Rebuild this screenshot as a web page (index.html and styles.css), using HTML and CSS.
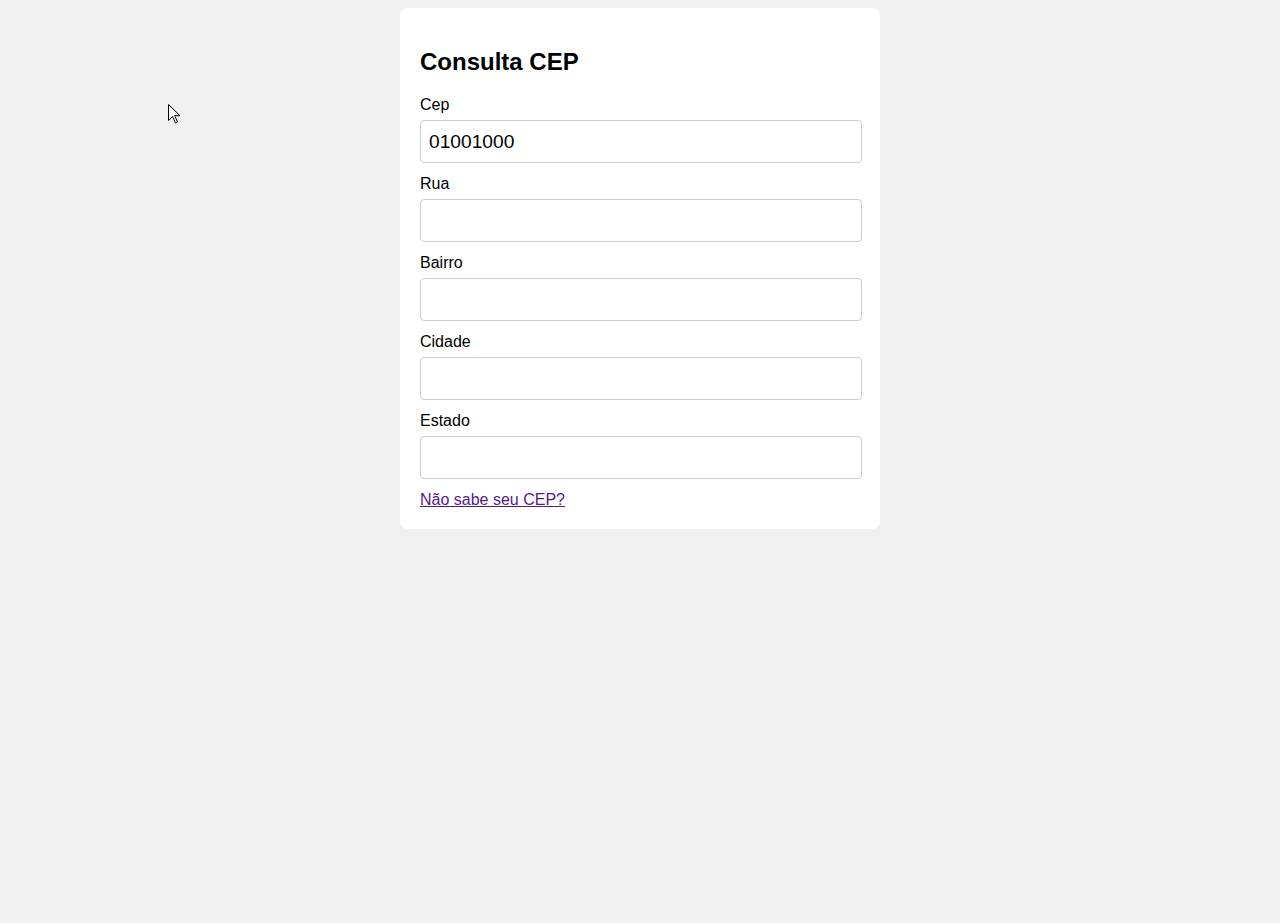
FILE: index.html
```html
<!DOCTYPE html>
<html lang="pt-BR">
<head>
<meta charset="utf-8">
<title>Consulta CEP</title>
<link rel="stylesheet" href="styles.css">
</head>
<body>
<div class="card">
  <h2 class="title">Consulta CEP</h2>
  <label class="label" for="cep">Cep</label>
  <input class="field" id="cep" type="text" value="01001000">
  <label class="label" for="rua">Rua</label>
  <input class="field" id="rua" type="text">
  <label class="label" for="bairro">Bairro</label>
  <input class="field" id="bairro" type="text">
  <label class="label" for="cidade">Cidade</label>
  <input class="field" id="cidade" type="text">
  <label class="label" for="estado">Estado</label>
  <input class="field" id="estado" type="text">
  <a class="link" href="#">Não sabe seu CEP?</a>
</div>
<svg class="cursor" width="13" height="20" viewBox="0 0 13 20"><path d="M0.5 0.5 L0.5 16.5 L4.5 12.5 L7.5 19 L9.5 18 L6.7 11.7 L12 11.7 Z" fill="#fff" stroke="#000" stroke-width="1" stroke-linejoin="miter"/></svg>
</body>
</html>
```
FILE: styles.css
```css
html, body {
  margin: 0;
  padding: 0;
}
body {
  background: #f0f0f0;
  font-family: "Liberation Sans", Arial, sans-serif;
  color: #000;
  padding: 8px;
  min-height: 923px;
  box-sizing: border-box;
}
.card {
  width: 480px;
  margin: 0 auto;
  background: #fff;
  border-radius: 8px;
  padding: 20px;
  box-sizing: border-box;
  display: flex;
  flex-direction: column;
}
.title {
  margin: 20px 0 20px;
  font-size: 24px;
  line-height: 28px;
  font-weight: bold;
}
.label {
  display: block;
  font-size: 16px;
  line-height: 18px;
  margin-bottom: 6px;
}
.field {
  display: block;
  width: calc(100% + 2px);
  height: 43px;
  box-sizing: border-box;
  border: 1px solid #ccc;
  border-radius: 4px;
  padding: 0 8px;
  margin: 0 0 12px;
  font-family: "Liberation Sans", Arial, sans-serif;
  font-size: 19.2px;
  color: #000;
  background: #fff;
  outline: none;
}
.link {
  display: block;
  align-self: flex-start;
  font-size: 16px;
  line-height: 18px;
  color: #551a8b;
  text-decoration: underline;
}
.cursor {
  position: absolute;
  left: 168px;
  top: 104px;
}
```
